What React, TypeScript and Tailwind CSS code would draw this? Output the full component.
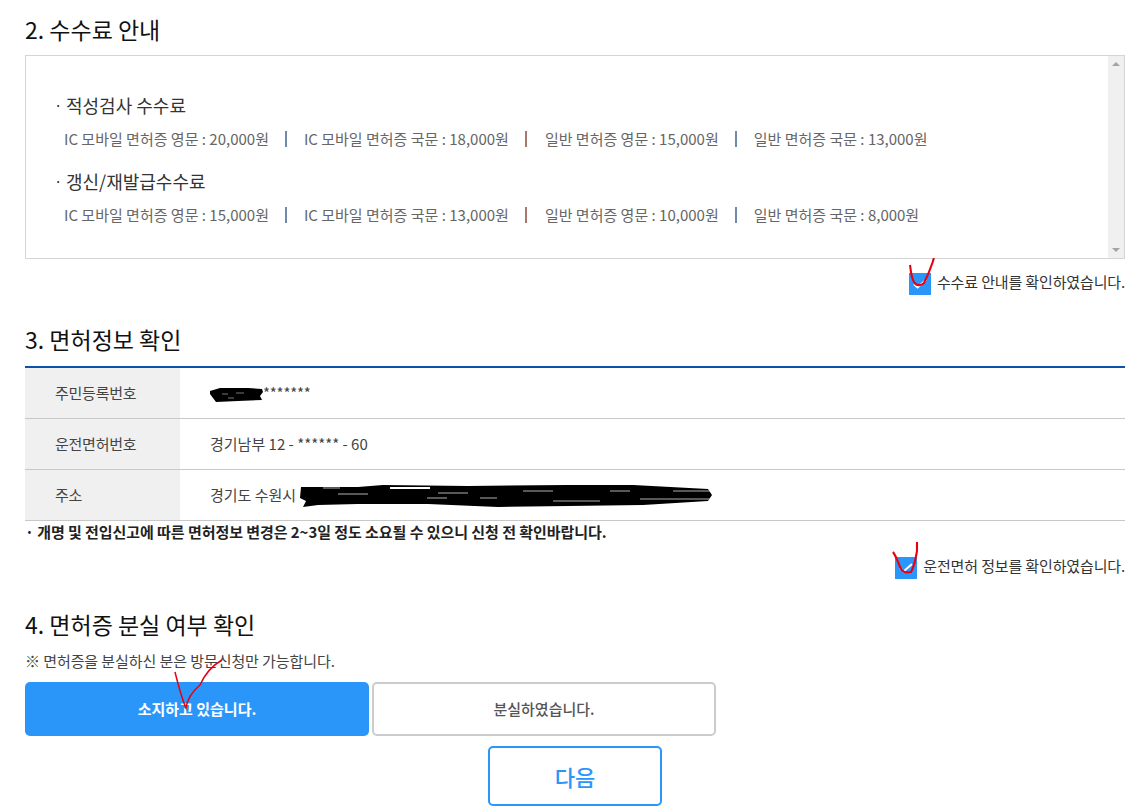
const font = "[font-family:'Noto_Sans_CJK_KR','Noto_Sans',sans-serif]";

const feeGroups = [
  {
    title: "적성검사 수수료",
    items: [
      "IC 모바일 면허증 영문 : 20,000원",
      "IC 모바일 면허증 국문 : 18,000원",
      "일반 면허증 영문 : 15,000원",
      "일반 면허증 국문 : 13,000원",
    ],
  },
  {
    title: "갱신/재발급수수료",
    items: [
      "IC 모바일 면허증 영문 : 15,000원",
      "IC 모바일 면허증 국문 : 13,000원",
      "일반 면허증 영문 : 10,000원",
      "일반 면허증 국문 : 8,000원",
    ],
  },
];

const sepClasses = [
  "ml-[16px] mr-[17px] bg-[#7089ad]",
  "ml-[16px] mr-[18px] bg-[#a9776e]",
  "ml-[16px] mr-[17px] bg-[#7089ad]",
];

const Heading = ({ children }: { children: React.ReactNode }) => (
  <h2 className="text-[23px] leading-[34px] font-normal text-[#111]">{children}</h2>
);

const Check = ({ label, mark }: { label: string; mark: string }) => (
  <div className="flex h-[22px] items-center justify-end gap-[6px]">
    <span className="relative top-[2px] flex h-[22px] w-[22px] items-center justify-center bg-[#2b96fa]">
      <svg viewBox="0 0 22 22" className="h-[22px] w-[22px]" fill="none">
        <path d="M5 11l3.5 3.5L17 7" stroke="#fff" strokeWidth="2" />
      </svg>
      {/* red pen mark drawn over the checkbox */}
      <svg viewBox="0 0 30 36" className="absolute left-[-3px] top-[-15px] h-[36px] w-[30px]" fill="none">
        <path d={mark} stroke="#e8000f" strokeWidth="2.1" />
      </svg>
    </span>
    <span className="text-[15px] leading-[22px] tracking-[-0.14px] text-[#333]">{label}</span>
  </div>
);

const rows = [
  { th: "주민등록번호", td: "" },
  { th: "운전면허번호", td: "경기남부 12 - ****** - 60" },
  { th: "주소", td: "경기도 수원시" },
];

export default function App() {
  return (
    <div className={`${font} h-[811px] w-[1140px] overflow-hidden bg-white pl-[25px] pr-[15px] pt-[12px]`}>
      <Heading>2. 수수료 안내</Heading>

      <div className="mt-[9px] flex h-[204px] border border-[#d5d5d5]">
        <div className="flex-1 pl-[30px] pt-[36px]">
          {feeGroups.map((g) => (
            <div key={g.title} className="mb-[16px]">
              <p className="flex text-[18px] leading-[26px] text-[#333]">
                <span className="ml-[-2px] w-[12px] text-[15px]">·</span>
                {g.title}
              </p>
              <div className="mt-[8px] flex items-center pl-[8px] text-[15px] leading-[26px] text-[#666]">
                {g.items.map((it, i) => (
                  <div key={it} className="flex items-center">
                    <span>{it}</span>
                    {i < 3 && <span className={`h-[16px] w-[2px] ${sepClasses[i]}`} />}
                  </div>
                ))}
              </div>
            </div>
          ))}
        </div>
        <div className="flex w-[16px] flex-col items-center justify-between bg-[#f0f0f0] py-[6px]">
          <span className="h-0 w-0 border-x-[4px] border-b-[4px] border-x-transparent border-b-[#a3a3a3]" />
          <span className="h-0 w-0 border-x-[4px] border-t-[4px] border-x-transparent border-t-[#a3a3a3]" />
        </div>
      </div>

      <div className="mt-[12px]">
        <Check
          label="수수료 안내를 확인하였습니다."
          mark="M4 7C5 13 5 19 8 24C10 28 15 28 18 25C21 19 24 12 26 6C27 4 27 2 28 0"
        />
      </div>

      <div className="mt-[29px]">
        <Heading>3. 면허정보 확인</Heading>
      </div>

      <div className="mt-[10px] border-t-2 border-[#0b52ab]">
        {rows.map((r) => (
          <div key={r.th} className="flex h-[51px] border-b border-[#c8c8c8] text-[15px] text-[#444]">
            <div className="flex w-[155px] items-center bg-[#f0f0f0] pl-[30px] tracking-[-0.25px]">{r.th}</div>
            <div className="relative flex flex-1 items-center pl-[30px]">
              {r.th === "주민등록번호" && (
                <>
                  <span className="w-[53px]" />
                  <span className="relative top-0 tracking-[-0.2px]">*******</span>
                  <svg viewBox="0 0 56 18" className="absolute left-[28px] top-[18px] h-[18px] w-[56px]">
                    <path d="M2 5L12 2L40 2L54 3L55 6L52 10L54 14L30 15L8 16L5 12L2 8Z" fill="#000" />
                    <path d="M14 8H20M28 7H36M20 12H26" stroke="#777" strokeWidth="1" />
                  </svg>
                </>
              )}
              {r.td}
              {r.th === "주소" && (
                <svg viewBox="0 0 416 30" className="absolute left-[118px] top-[12px] h-[30px] w-[416px]">
                  <path d="M3 5L60 5L85 3L170 4L270 3L335 3L410 7L414 13L410 19L345 23L270 24L200 25L130 22L60 22L20 23L5 25L8 19L2 16Z" fill="#000" />
                  <path d="M92 6H132" stroke="#fff" strokeWidth="2" />
                  <path d="M25 6H42M129 16H149M182 16H199M312 9H332M375 9H412M225 9H255M342 17H412M255 19H302M40 12H70M140 11H170" stroke="#ddd" strokeWidth="0.8" />
                </svg>
              )}
            </div>
          </div>
        ))}
      </div>

      <p className="text-[15px] leading-[22px] font-bold tracking-[-0.06px] text-[#222]">
        · 개명 및 전입신고에 따른 면허정보 변경은 2~3일 정도 소요될 수 있으니 신청 전 확인바랍니다.
      </p>

      <div className="mt-[12px]">
        <Check
          label="운전면허 정보를 확인하였습니다."
          mark="M1 10C4 14 6 20 8 25C10 30 13 31 19 30C22 25 24 15 25 9C25 6 25 3 25 0"
        />
      </div>

      <div className="mt-[30px]">
        <Heading>4. 면허증 분실 여부 확인</Heading>
      </div>

      <p className="mt-[10px] text-[15px] leading-[20px] tracking-[-0.08px] text-[#444]">
        ※ 면허증을 분실하신 분은 방문신청만 가능합니다.
      </p>

      <div className="relative mt-[11px] flex w-[691px] gap-[3px]">
        <button className="flex h-[54px] w-[344px] items-center justify-center rounded-[5px] bg-[#2b96fa] text-[15px] font-bold text-white">
          소지하고 있습니다.
        </button>
        <button className="flex h-[54px] w-[344px] items-center justify-center rounded-[5px] border-2 border-[#ccc] bg-white text-[15px] font-medium text-[#555]">
          분실하였습니다.
        </button>
        <svg viewBox="0 0 52 52" className="absolute left-[148px] top-[-23px] h-[52px] w-[52px]" fill="none">
          <path d="M2 13C5 25 9 40 13 49C14 40 20 32 27 26C32 15 40 6 49 1" stroke="#e8000f" strokeWidth="1.5" />
        </svg>
      </div>

      <div className="mt-[10px] flex w-[1100px] justify-center">
        <button className="h-[60px] w-[174px] rounded-[5px] border-2 border-[#2b96fa] bg-white text-[22px] font-medium text-[#2b96fa]">
          다음
        </button>
      </div>
    </div>
  );
}
